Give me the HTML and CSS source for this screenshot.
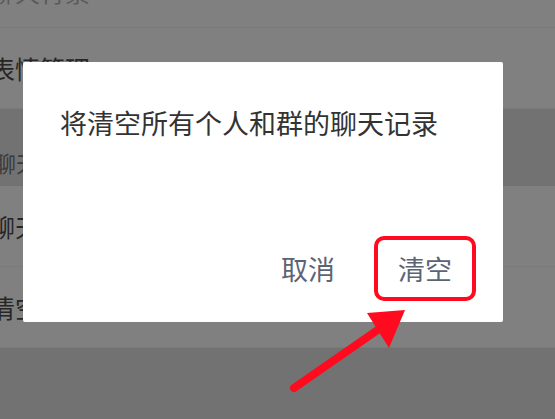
FILE: index.html
```html
<!DOCTYPE html>
<html lang="zh-CN">
<head>
  <meta charset="UTF-8" />
  <meta name="viewport" content="width=device-width, initial-scale=1.0"/>
  <title>清空聊天记录</title>
  <link rel="stylesheet" href="styles.css">
</head>
<body>

  <ul class="settings">
    <li class="item item-top"><span>聊天背景</span></li>
    <li class="item item-main"><span>表情管理</span></li>
    <li class="section"><span>聊天</span></li>
    <li class="item item-main"><span>聊天文件</span></li>
    <li class="item item-main"><span>清空聊天记录</span></li>
    <li class="rest"></li>
  </ul>

  <div class="dialog">
    <p class="dialog-msg">将清空所有个人和群的聊天记录</p>
    <div class="dialog-actions">
      <button class="btn">取消</button>
      <button class="btn btn-marked">清空</button>
    </div>
  </div>

  <svg class="arrow" width="135" height="100" viewBox="0 0 135 100">
    <line x1="14" y1="88" x2="102" y2="27" stroke="#ff0a1e" stroke-width="8" stroke-linecap="round"/>
    <polygon points="125,10 87,13 109,48" fill="#ff0a1e"/>
  </svg>

</body>
</html>
```

FILE: styles.css
```css
body {
  margin: 0;
  width: 555px;
  height: 419px;
  overflow: hidden;
  position: relative;
  font-family: "Noto Sans CJK SC", "Noto Sans", sans-serif;
  background: #727272;
}

.settings {
  list-style: none;
  margin: 0;
  padding: 0;
}

.item {
  display: flex;
  align-items: center;
  background: #808080;
  color: #262626;
  font-size: 25px;
  border-bottom: 1px solid #7a7a7a;
}

.item span {
  margin-left: -10px;
}

.item-top {
  height: 27px;
  align-items: flex-start;
}

.item-top span {
  margin-top: -27px;
  color: #5a5a5a;
}

.item-main {
  height: 80px;
}

.section {
  height: 77px;
  display: flex;
  align-items: flex-end;
  background: #727272;
  color: #3a3a3a;
  font-size: 22px;
}

.section span {
  margin-left: -6px;
  margin-bottom: 8px;
}

.rest {
  height: 70px;
  background: #727272;
}

.dialog {
  position: absolute;
  left: 23px;
  top: 62px;
  width: 480px;
  height: 260px;
  box-sizing: border-box;
  background: #fff;
  border-radius: 2px;
  display: flex;
  flex-direction: column;
  padding: 0 27px 21px 37px;
}

.dialog-msg {
  margin: 0;
  padding-top: 47px;
  font-size: 27px;
  line-height: 27px;
  color: #333;
}

.dialog-actions {
  margin-top: auto;
  display: flex;
  justify-content: flex-end;
  align-items: center;
  gap: 15px;
}

.btn {
  font-family: inherit;
  font-size: 27px;
  line-height: 27px;
  color: #5c6474;
  background: none;
  border: 4px solid transparent;
  padding: 15px 20px;
}

.btn-marked {
  border-color: #ff0a1e;
  border-radius: 10px;
}

.arrow {
  position: absolute;
  left: 280px;
  top: 300px;
}
```
